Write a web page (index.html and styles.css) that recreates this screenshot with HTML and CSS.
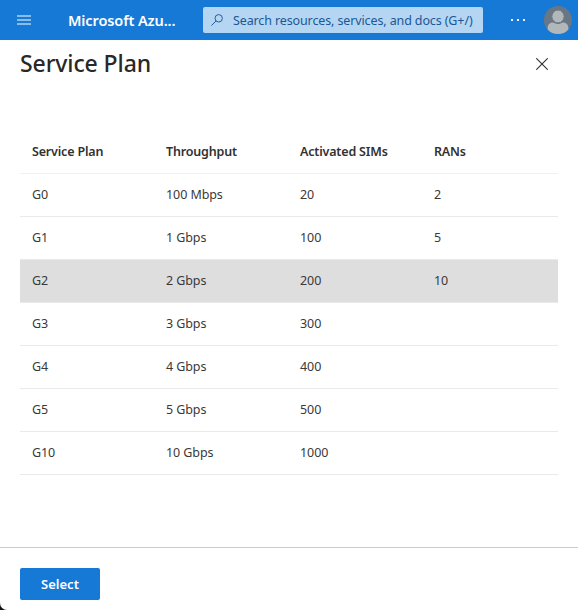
FILE: index.html
```html
<!DOCTYPE html>
<html lang="en">
<head>
<meta charset="utf-8">
<title>Service Plan</title>
<link rel="stylesheet" href="styles.css">
</head>
<body>
<div class="app">
  <header class="topbar">
    <svg class="menu-icon" width="14" height="10" viewBox="0 0 14 10"><path d="M0 1h14M0 5h14M0 9h14"/></svg>
    <span class="brand">Microsoft Azu...</span>
    <div class="search">
      <svg class="search-icon" width="12" height="12" viewBox="0 0 12 12"><circle cx="7.7" cy="4.3" r="3.7"/><path d="M5.1 6.9L.4 11.6"/></svg>
      <span class="search-text">Search resources, services, and docs (G+/)</span>
    </div>
    <svg class="more-icon" width="14" height="2" viewBox="0 0 14 2"><path d="M0 0h2v2H0zM6 0h2v2H6zM12 0h2v2h-2z"/></svg>
    <svg class="avatar" width="28" height="28" viewBox="0 0 28 28">
      <circle class="avatar-bg" cx="14" cy="14" r="14"/>
      <path class="avatar-body" d="M3.6 23.4v-1.2c0-3.3 2.2-5.7 5.2-5.7 1.2 0 2.7 1.5 5.2 1.5s4-1.5 5.2-1.5c3 0 5.2 2.4 5.2 5.7v1.2A14 14 0 0 1 14 28a14 14 0 0 1-10.4-4.6z"/>
      <ellipse class="avatar-head" cx="14" cy="10.5" rx="6.2" ry="6.5"/>
    </svg>
  </header>
  <main class="panel">
    <div class="heading">
      <h1>Service Plan</h1>
      <svg class="close" width="12" height="12" viewBox="0 0 12 12"><path d="M.3.3l11.4 11.4M11.7.3L.3 11.7"/></svg>
    </div>
    <table>
      <thead><tr><th>Service Plan</th><th>Throughput</th><th>Activated SIMs</th><th>RANs</th></tr></thead>
      <tbody>
        <tr><td>G0</td><td>100 Mbps</td><td>20</td><td>2</td></tr>
        <tr><td>G1</td><td>1 Gbps</td><td>100</td><td>5</td></tr>
        <tr class="selected"><td>G2</td><td>2 Gbps</td><td>200</td><td>10</td></tr>
        <tr><td>G3</td><td>3 Gbps</td><td>300</td><td></td></tr>
        <tr><td>G4</td><td>4 Gbps</td><td>400</td><td></td></tr>
        <tr><td>G5</td><td>5 Gbps</td><td>500</td><td></td></tr>
        <tr><td>G10</td><td>10 Gbps</td><td>1000</td><td></td></tr>
      </tbody>
    </table>
  </main>
  <footer class="footer"><button class="select">Select</button></footer>
</div>
</body>
</html>
```
FILE: styles.css
```css
* { box-sizing: border-box; }
html { background: #111; }
body {
  margin: 0;
  font-family: "Noto Sans", "Open Sans", sans-serif;
  font-size: 12.5px;
  color: #3a3938;
}
.app {
  display: flex;
  flex-direction: column;
  height: 610px;
  background: #fff;
  border-bottom-left-radius: 7px;
  overflow: hidden;
}
svg { flex: none; }
.topbar {
  display: flex;
  align-items: center;
  height: 40px;
  padding: 0 6px 0 17px;
  background: #1579d5;
}
.menu-icon { fill: none; stroke: #8abcea; stroke-width: 2; }
.brand {
  width: 135px;
  margin-left: 37px;
  font-size: 14.5px;
  font-weight: 600;
  letter-spacing: -0.1px;
  white-space: nowrap;
  color: #fff;
}
.search {
  display: flex;
  align-items: center;
  width: 280px;
  height: 26px;
  padding-left: 8px;
  border-radius: 2px;
  background: #b4d6f2;
  color: #1d5795;
}
.search-icon { fill: none; stroke: #245f9d; stroke-width: 1; }
.search-text { margin-left: 10px; letter-spacing: -0.12px; white-space: nowrap; }
.more-icon { margin-left: 28px; fill: #e8f2fb; }
.avatar { margin-left: auto; }
.avatar-bg { fill: #697785; }
.avatar-body { fill: #b2b7ba; }
.avatar-head { fill: #b2b7ba; stroke: #697785; stroke-width: 1; }
.panel { flex: 1; padding: 0 20px; }
.heading {
  display: flex;
  align-items: center;
  justify-content: space-between;
  height: 48px;
  margin-bottom: 42px;
  padding-right: 10px;
}
h1 {
  margin: 0 0 2px;
  font-size: 23px;
  font-weight: 500;
  letter-spacing: -0.1px;
  line-height: 32px;
  color: #292827;
}
.close { fill: none; stroke: #323130; stroke-width: 1.1; }
table { width: 538px; border-collapse: separate; border-spacing: 0; table-layout: fixed; }
th, td {
  width: 134px;
  height: 43px;
  padding: 0 0 0 12px;
  border-bottom: 1px solid #e9e9e9;
  text-align: left;
  line-height: 18px;
  white-space: nowrap;
  letter-spacing: -0.08px;
}
th:last-child, td:last-child { width: auto; }
th { height: 44px; border-bottom-color: #f0f0f0; font-weight: 600; letter-spacing: -0.18px; color: #323130; }
.selected td { background: #dedede; }
.footer { height: 63px; padding: 20px; border-top: 1px solid #ccc; }
.select {
  display: block;
  width: 80px;
  height: 32px;
  padding: 0;
  border: 0;
  border-radius: 2px;
  background: #1579d5;
  color: #fff;
  font: 600 13px "Noto Sans", "Open Sans", sans-serif;
}
```
